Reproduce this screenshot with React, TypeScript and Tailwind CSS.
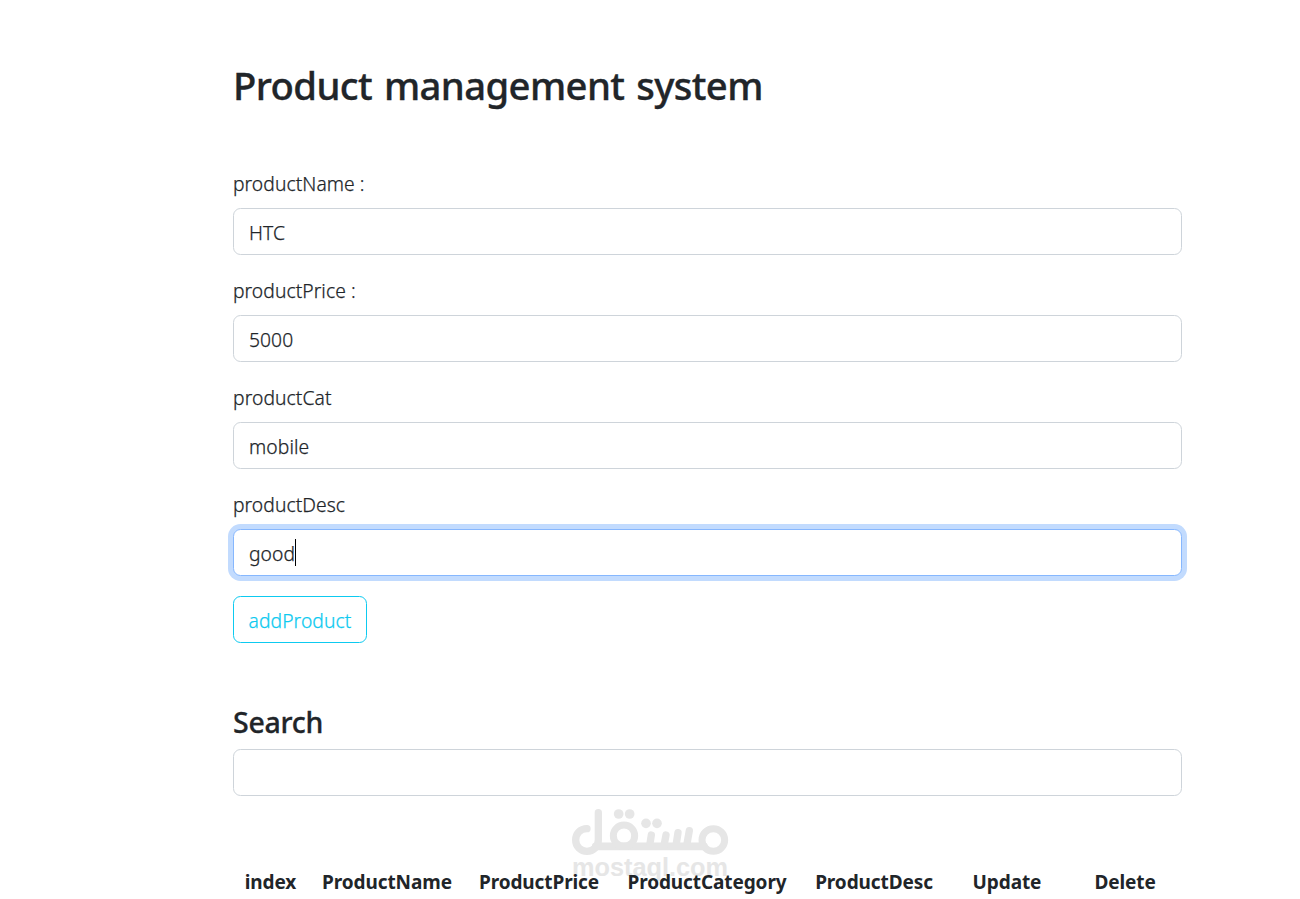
import { useState } from "react";

const inputBase =
  "block h-[47px] w-full rounded-[7.5px] border bg-white px-[15px] pt-[2px] text-[19.25px] font-light [-webkit-text-stroke:0.25px] text-[#212529] outline-none";

function Field({ label, value, focused = false, spacing }: { label: string; value: string; focused?: boolean; spacing: string }) {
  const [text, setText] = useState(value);
  return (
    <div className="mb-5">
      <label className={`mb-[8px] block h-[32px] text-[19.25px] leading-[31px] font-light [-webkit-text-stroke:0.25px] whitespace-pre ${spacing}`}>
        <span>{label}</span>
      </label>
      {focused ? (
        <div className={`${inputBase} flex items-center border-[#86b7fe] shadow-[0_0_0_5px_#c2dbfe]`}>
          <span className={`pt-px ${spacing}`}>{text}</span>
          <span className="-mt-[2px] h-[27px] w-px bg-black" />
        </div>
      ) : (
        <input
          className={`${inputBase} border-[#ced4da] ${spacing}`}
          value={text}
          onChange={(e) => setText(e.target.value)}
        />
      )}
    </div>
  );
}

function Watermark() {
  return (
    <div className="pointer-events-none absolute top-[807px] left-[570px] w-[160px] text-[#e6e6e6]">
      <svg width="160" height="50" viewBox="60 36 480 150" fill="none" stroke="currentColor" strokeLinecap="round">
        <path d="M111 101C90 101 77 117 77 135C77 155 92 169 111 169C130 169 145 155 145 135V53" strokeWidth="22" />
        <path d="M137 154H462" strokeWidth="23" />
        <circle cx="222" cy="122" r="32" strokeWidth="21" />
        <circle cx="490" cy="135" r="34" strokeWidth="21" />
        <path d="M304 120L299 152M348 120L342 152M384 113L378 152M418 107L410 152" strokeWidth="22" />
        <g fill="currentColor" stroke="none">
          <circle cx="206" cy="57" r="14.5" />
          <circle cx="239" cy="57" r="14.5" />
          <circle cx="288" cy="85" r="14.5" />
          <circle cx="321" cy="85" r="14.5" />
        </g>
      </svg>
      <div className="-mt-[5px] text-center font-['Liberation_Sans',sans-serif] text-[25.3px] leading-[30px] font-bold whitespace-nowrap">
        mostaql.com
      </div>
    </div>
  );
}

const columns = [
  { name: "index", width: "w-[75px]" },
  { name: "ProductName", width: "w-[158px]" },
  { name: "ProductPrice", width: "w-[146px]" },
  { name: "ProductCategory", width: "w-[190px]" },
  { name: "ProductDesc", width: "w-[144px]" },
  { name: "Update", width: "w-[122px]" },
  { name: "Delete", width: "w-[114px]" },
];

export default function App() {
  return (
    <div className="relative h-[899px] w-[1300px] overflow-hidden bg-white font-['Noto_Sans',sans-serif] text-[#212529]">
      <Watermark />
      <main className="relative ml-[233px] w-[949px] pt-[61px]">
        <h1 className="h-[48px] text-[38.25px] leading-[48px] font-medium tracking-[-0.6px] [-webkit-text-stroke:0.35px] [word-spacing:2.5px] whitespace-nowrap">
          <span>Product management system</span>
        </h1>
        <form className="pt-[59px]" onSubmit={(e) => e.preventDefault()}>
          <Field label="productName :" value="HTC" spacing="tracking-[0.07px]" />
          <Field label="productPrice :" value="5000" spacing="tracking-[0.07px]" />
          <Field label="productCat" value="mobile" spacing="tracking-[0.1px]" />
          <Field label="productDesc" value="good" focused spacing="tracking-[0.07px]" />
          <button className="block h-[47px] w-[134px] rounded-[7.5px] border border-[#0dcaf0] pt-[3px] text-center text-[19.25px] font-light tracking-[0.1px] text-[#0dcaf0] [-webkit-text-stroke:0.25px]">
            addProduct
          </button>
        </form>
        <h3 className="mt-[62px] mb-[9px] h-[35px] text-[28.5px] leading-[35px] font-medium tracking-[-0.25px] [-webkit-text-stroke:0.3px]">
          <span>Search</span>
        </h3>
        <input className={`${inputBase} border-[#ced4da]`} aria-label="Search" />
        <table className="mt-[61px] table-fixed border-collapse">
          <thead>
            <tr>
              {columns.map((c) => (
                <th key={c.name} className={`h-[51px] p-0 text-center text-[19px] font-bold tracking-[-0.1px] ${c.width}`}>
                  <span>{c.name}</span>
                </th>
              ))}
            </tr>
          </thead>
        </table>
      </main>
    </div>
  );
}
